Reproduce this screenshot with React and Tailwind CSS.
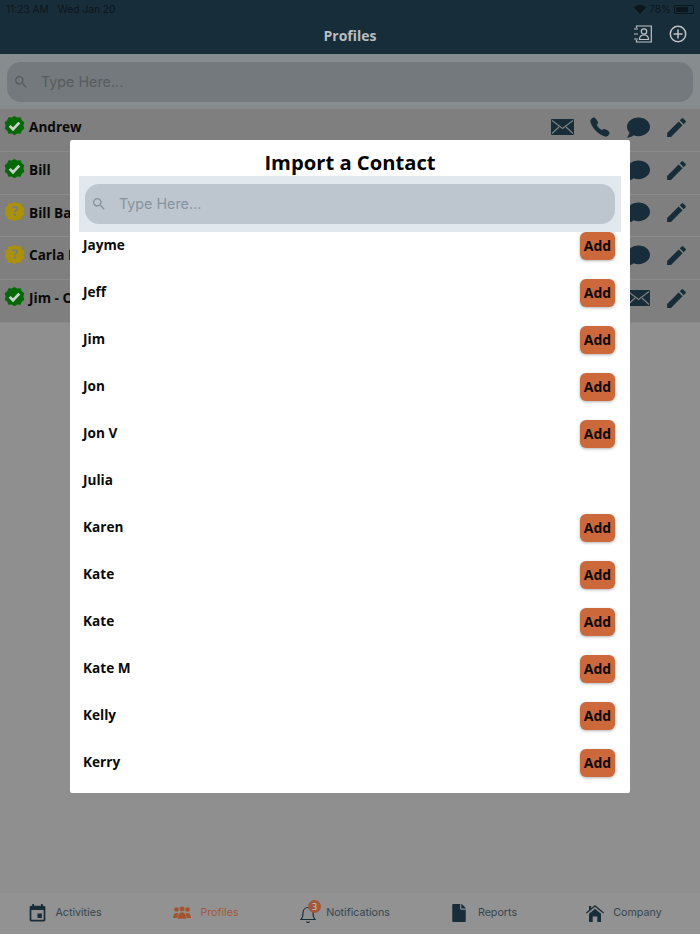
import React from 'react';
import { IoCall } from 'react-icons/io5';
import { FaComment, FaFile } from 'react-icons/fa';
import { MdSearch, MdEvent, MdEdit } from 'react-icons/md';

const openSans = { fontFamily: '"Open Sans", sans-serif' };
const inter = { fontFamily: 'Inter, sans-serif' };

const profiles = [
  { name: 'Andrew', ok: true, icons: ['mail', 'phone', 'chat'] },
  { name: 'Bill', ok: true, icons: ['chat'] },
  { name: 'Bill Ba', ok: false, icons: ['chat'] },
  { name: 'Carla I', ok: false, icons: ['chat'] },
  { name: 'Jim - O', ok: true, icons: ['mail'] },
];

const contacts = [
  { name: 'Jayme', add: true },
  { name: 'Jeff', add: true },
  { name: 'Jim', add: true },
  { name: 'Jon', add: true },
  { name: 'Jon V', add: true },
  { name: 'Julia', add: false },
  { name: 'Karen', add: true },
  { name: 'Kate', add: true },
  { name: 'Kate', add: true },
  { name: 'Kate M', add: true },
  { name: 'Kelly', add: true },
  { name: 'Kerry', add: true },
];

const Badge = ({ ok }) => (
  <svg width="21" height="21" viewBox="0 0 24 24" className="shrink-0 -mt-[3px]">
    <path
      d="M12 1l3.200 1.900 3.700-.3 1.400 3.400 2.900 2.400-1 3.600 1 3.600-2.900 2.400-1.400 3.400-3.700-.3L12 23l-3.200-1.900-3.700.3-1.400-3.400L.8 15.600l1-3.600-1-3.600L3.700 6l1.400-3.400 3.700.3z"
      fill={ok ? '#056a05' : '#ac9200'}
    />
    {ok ? (
      <path d="M6.500 12.500l3.800 3.800 7.200-7.600" fill="none" stroke="#d0d0d0" strokeWidth="3" />
    ) : (
      <text x="12" y="17.500" textAnchor="middle" fontSize="15" fontWeight="800" fill="#7f7f7f" style={openSans}>?</text>
    )}
  </svg>
);

const Envelope = () => (
  <svg width="23" height="16" viewBox="0 0 23 16">
    <rect width="23" height="16" rx="1" fill="#182d3a" />
    <path d="M1 1.500l10.500 8 10.500-8M1 14.500l7-6.500M22 14.500l-7-6.500" fill="none" stroke="#7f7f7f" strokeWidth="1.200" />
  </svg>
);

const ContactsIcon = () => (
  <svg width="19" height="18" viewBox="0 0 19 18" fill="none" stroke="#c0c4c6" strokeWidth="1.200">
    <path d="M3.500 3V1h14.800v16H3.500v-2" />
    <path d="M1 4h4M1 9h4M1 14h4" />
    <circle cx="11" cy="6.500" r="2.700" />
    <path d="M6.500 14.500c0-3 1.800-4.500 4.500-4.500s4.500 1.500 4.500 4.500z" />
  </svg>
);

const PlusCircle = () => (
  <svg width="18" height="18" viewBox="0 0 18 18" fill="none" stroke="#c0c4c6" strokeWidth="1.500">
    <circle cx="9" cy="9" r="7.700" />
    <path d="M9 4.500v9M4.500 9h9" />
  </svg>
);

const PeopleIcon = () => (
  <svg width="18" height="13" viewBox="0 0 18 13" fill="#a5532d">
    <circle cx="3.500" cy="3.500" r="2.300" />
    <circle cx="14.500" cy="3.500" r="2.300" />
    <path d="M0 12c0-3 1.200-5 3.500-5s3.500 2 3.500 5zM11 12c0-3 1.200-5 3.500-5s3.500 2 3.500 5z" />
    <circle cx="9" cy="3" r="2.800" stroke="#929292" strokeWidth=".6" />
    <path d="M4.500 13c0-4 1.500-7 4.500-7s4.500 3 4.500 7z" stroke="#929292" strokeWidth=".6" />
  </svg>
);

const BellIcon = () => (
  <svg width="16" height="21" viewBox="0 0 16 21" fill="none" stroke="#182d3a" strokeWidth="1.200">
    <path d="M1 16.500c1.500-1.500 2-3 2-6.500 0-3 2-5.500 5-5.500s5 2.500 5 5.500c0 3.500.5 5 2 6.500z" />
    <path d="M6.500 18.500c.4 1.300 2.600 1.300 3 0" />
  </svg>
);

const HomeIcon = () => (
  <svg width="18" height="18" viewBox="0 0 18 18" fill="#182d3a">
    <path d="M0 8.500L9 1l9 7.500-.8 1L9 2.800.8 9.500zM3 2h2.200v2L3 6z" />
    <path d="M3 9.800L9 4.800l6 5V18h-3.700v-5.500H6.700V18H3z" />
  </svg>
);

const RowIcon = ({ type }) => (
  <div className="w-[38px] flex justify-center">
    {type === 'mail' && <Envelope />}
    {type === 'phone' && <IoCall size={22} className="text-[#182d3a]" />}
    {type === 'chat' && <FaComment size={23} className="text-[#182d3a]" />}
  </div>
);

const SearchBox = ({ bg, color }) => (
  <div className={`h-10 rounded-[14px] flex items-center pl-[6px] ${bg}`}>
    <MdSearch size={16} className={color} />
    <span className={`text-[14.3px] ml-[12px] ${color}`} style={inter}>Type Here...</span>
  </div>
);

const Tab = ({ icon, label, active, width, gap }) => (
  <div className={`flex items-center justify-center ${gap} ${width}`}>
    {icon}
    <span className={`text-[10.7px] mt-px ${active ? 'text-[#a3583a]' : 'text-[#33454f]'}`} style={inter}>{label}</span>
  </div>
);

const App = () => {
  return (
    <div className="relative w-[700px] h-[934px] overflow-hidden flex flex-col bg-[#8f8f8f]" style={openSans}>
      {/* Header */}
      <header className="h-[54px] bg-[#182d3a] shrink-0 relative">
        <div className="flex justify-between px-[6px] pt-[2px] text-[10.2px] text-[#0c161d]" style={inter}>
          <div className="flex gap-[9px]">
            <span>11:23 AM</span>
            <span>Wed Jan 20</span>
          </div>
          <div className="flex items-center gap-[3px]">
            <svg width="12" height="9" viewBox="0 0 12 9">
              <path d="M6 9L0 2.600C3.500-.8 8.500-.8 12 2.600z" fill="#0c161d" />
            </svg>
            <span>78%</span>
            <div className="w-[20px] h-[9px] rounded-[2px] border border-[#0c161d] p-px flex">
              <div className="w-[78%] bg-[#0c161d] rounded-[1px]" />
            </div>
          </div>
        </div>
        <h1 className="text-center text-sm font-bold text-[#b9bdbf] leading-5 mt-[9px]">Profiles</h1>
        <div className="absolute right-[13px] top-[25px] flex items-center gap-[17px]">
          <ContactsIcon />
          <PlusCircle />
        </div>
      </header>

      {/* Search */}
      <div className="h-[55px] bg-[#878d8f] px-[7px] pt-2 shrink-0">
        <SearchBox bg="bg-[#73797c]" color="text-[#565c5f]" />
      </div>

      {/* Profile rows */}
      <div className="bg-[#7f7f7f]">
        {profiles.map((profile, index) => (
          <div key={index} className="h-[42.75px] flex items-center pl-[4px] pr-[5px] pb-[5px] border-b border-[#8a8a8a]">
            <Badge ok={profile.ok} />
            <span className="ml-[4px] text-[13.6px] font-bold text-[#0a0a0a]">{profile.name}</span>
            <div className="ml-auto flex items-center">
              {profile.icons.map((type, i) => <RowIcon key={i} type={type} />)}
              <div className="w-[38px] flex justify-center">
                <MdEdit size={25} className="text-[#182d3a]" />
              </div>
            </div>
          </div>
        ))}
      </div>

      {/* Tab bar */}
      <nav className="mt-auto h-[40px] mb-px bg-[#929292] flex items-center">
        <Tab width="w-[129px]" gap="gap-[7px]" label="Activities" icon={<MdEvent size={21} className="text-[#182d3a]" />} />
        <Tab width="w-[154px]" gap="gap-[9px]" label="Profiles" active icon={<PeopleIcon />} />
        <Tab
          width="w-[124px]"
          gap="gap-[10px]"
          label="Notifications"
          icon={
            <div className="relative h-[21px]">
              <BellIcon />
              <span className="absolute -top-[3px] -right-[5px] w-[13px] h-[13px] rounded-full bg-[#a3583a] text-[#d0d0d0] text-[9px] leading-[13px] text-center">3</span>
            </div>
          }
        />
        <Tab width="w-[153px]" gap="gap-[10px]" label="Reports" icon={<FaFile size={18} className="text-[#182d3a]" />} />
        <Tab width="w-[128px]" gap="gap-[9px]" label="Company" icon={<HomeIcon />} />
      </nav>

      {/* Import modal */}
      <div className="absolute left-[70px] top-[140px] w-[560px] h-[653px] bg-white flex flex-col px-[9px] rounded-[2px]">
        <h2 className="text-center text-[20.2px] font-bold text-black leading-[44px] h-[36px]">Import a Contact</h2>
        <div className="h-[56px] bg-[#e1e8ee] px-[6px] pt-2 shrink-0">
          <SearchBox bg="bg-[#bdc6cf]" color="text-[#86939e]" />
        </div>
        <div className="flex-1 overflow-hidden pl-[4px] pr-[6px]">
          {contacts.map((contact, index) => (
            <div key={index} className="h-[47px] flex items-start justify-between">
              <span className="text-[13.6px] font-bold text-[#0a0a0a] leading-[26px]">{contact.name}</span>
              {contact.add && (
                <button className="w-[35px] h-[28px] rounded-[6px] bg-[#cc683a] text-sm font-bold text-[#0a0a0a] shadow-[0_1px_3px_rgba(0,0,0,0.3)]">Add</button>
              )}
            </div>
          ))}
        </div>
      </div>
    </div>
  );
};

export default App;
